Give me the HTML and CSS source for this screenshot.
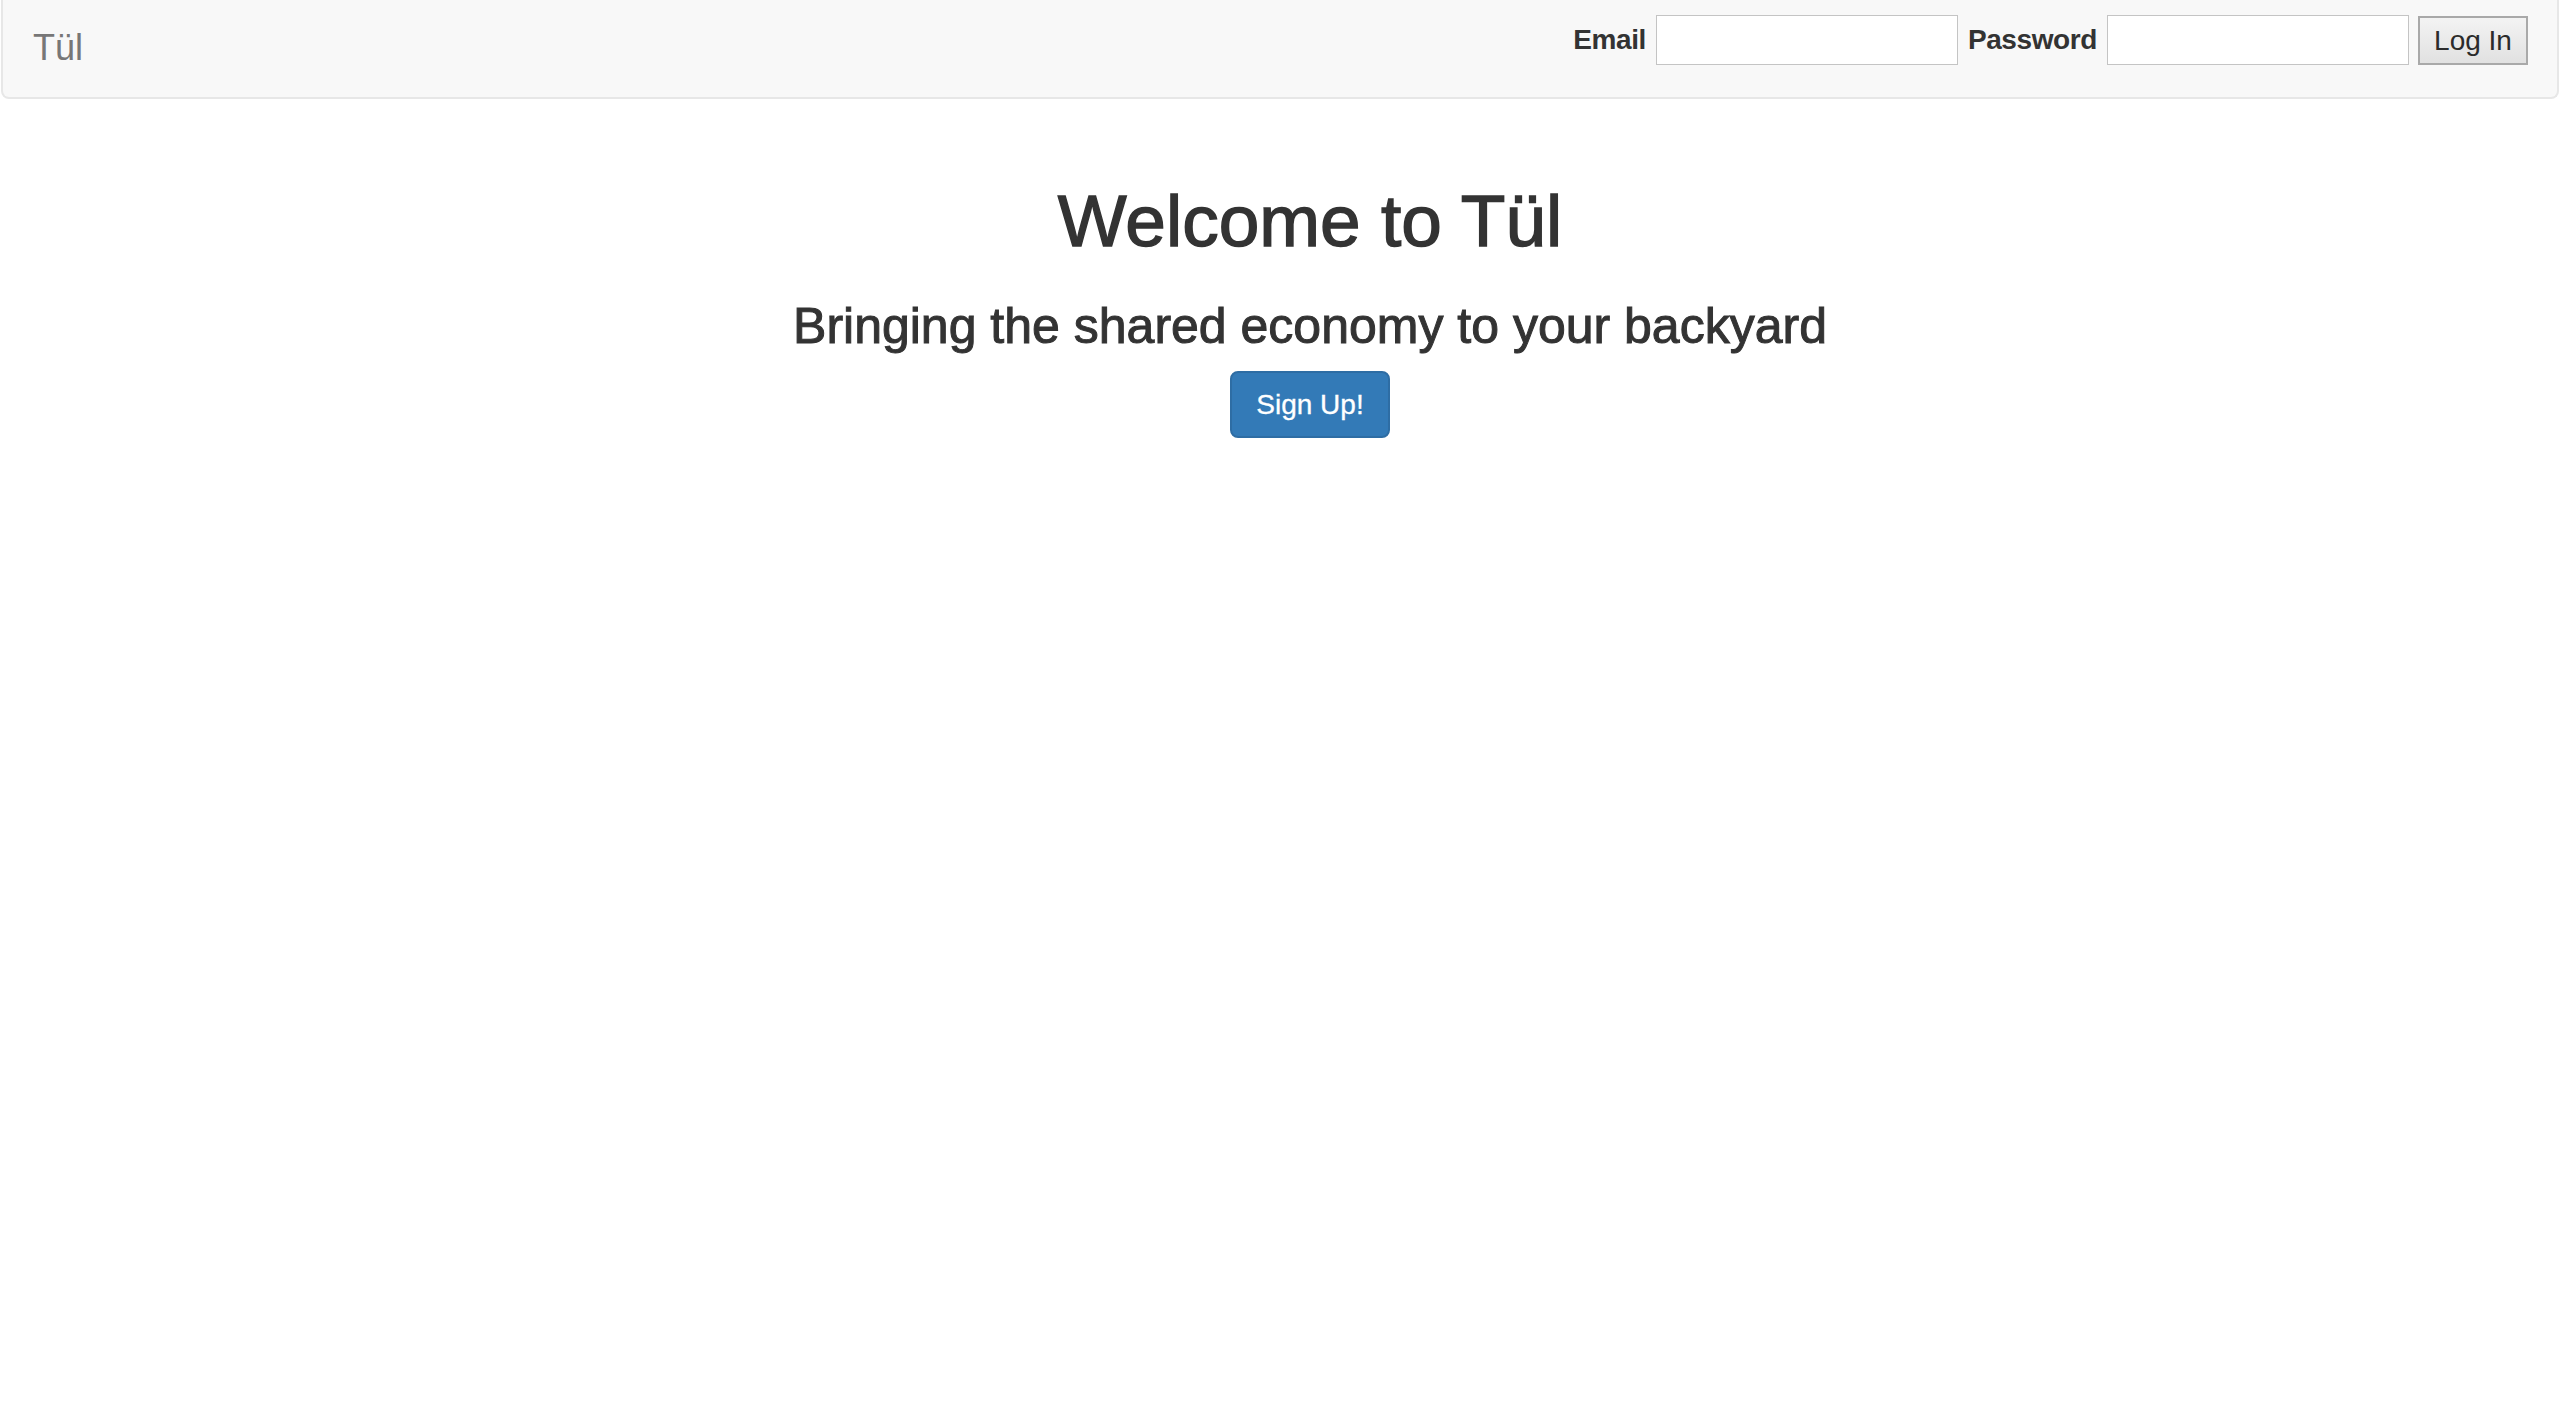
FILE: index.html
```html
<!DOCTYPE html>
<html lang="en">
<head>
<meta charset="utf-8">
<title>Tül</title>
<link rel="stylesheet" href="styles.css">
</head>
<body>
<nav class="navbar">
  <a class="brand" href="#">Tül</a>
  <form class="login">
    <label class="lbl" for="email">Email</label>
    <input class="field" id="email" type="email">
    <label class="lbl" for="pw">Password</label>
    <input class="field" id="pw" type="password">
    <button class="login-btn" type="button">Log In</button>
  </form>
</nav>
<main class="hero">
  <h1 class="title">Welcome to Tül</h1>
  <h3 class="subtitle">Bringing the shared economy to your backyard</h3>
  <button class="signup" type="button">Sign Up!</button>
</main>
</body>
</html>
```
FILE: styles.css
```css
html, body {
  margin: 0;
  padding: 0;
  background: #ffffff;
}
body {
  font-family: "Liberation Sans", Arial, sans-serif;
  color: #333333;
}
.navbar {
  display: flex;
  justify-content: space-between;
  align-items: flex-start;
  height: 97px;
  margin: 0 1px;
  background: #f8f8f8;
  border: 2px solid #e7e7e7;
  border-top: none;
  border-radius: 0 0 8px 8px;
  padding: 0 29px 0 30px;
}
.brand {
  font-size: 36px;
  line-height: 40px;
  padding-top: 28px;
  color: #777777;
  text-decoration: none;
}
.login {
  display: flex;
  align-items: center;
  gap: 10px;
  margin-top: 15px;
  height: 50px;
}
.lbl {
  font-size: 28px;
  font-weight: bold;
  letter-spacing: -0.4px;
  color: #333333;
}
.field {
  box-sizing: border-box;
  width: 302px;
  height: 50px;
  margin: 0;
  border: 1px solid #c4c4c4;
  background: #ffffff;
  font-size: 26px;
  padding: 0 6px;
}
.login-btn {
  box-sizing: border-box;
  height: 49px;
  width: 110px;
  margin: 1px 0 0 -1px;
  padding: 0;
  border: 2px solid #a9a9a9;
  border-radius: 0;
  background: linear-gradient(#f3f3f3, #e1e1e1);
  font-family: "Liberation Sans", Arial, sans-serif;
  font-size: 28px;
  color: #2b2b2b;
}
.hero {
  display: flex;
  flex-direction: column;
  align-items: center;
  padding-left: 60px;
  text-align: center;
}
.title {
  font-size: 73px;
  font-weight: normal;
  -webkit-text-stroke: 1.4px #333333;
  line-height: 80px;
  margin: 82px 0 0;
}
.subtitle {
  font-size: 50px;
  font-weight: normal;
  -webkit-text-stroke: 1px #333333;
  line-height: 56px;
  margin: 37px 0 0;
}
.signup {
  box-sizing: border-box;
  margin-top: 17px;
  height: 67px;
  padding: 0 24px;
  background: #337ab7;
  border: 2px solid #2e6da4;
  border-radius: 8px;
  color: #ffffff;
  font-family: "Liberation Sans", Arial, sans-serif;
  font-size: 28px;
  -webkit-text-stroke: 0.3px #ffffff;
}
```
